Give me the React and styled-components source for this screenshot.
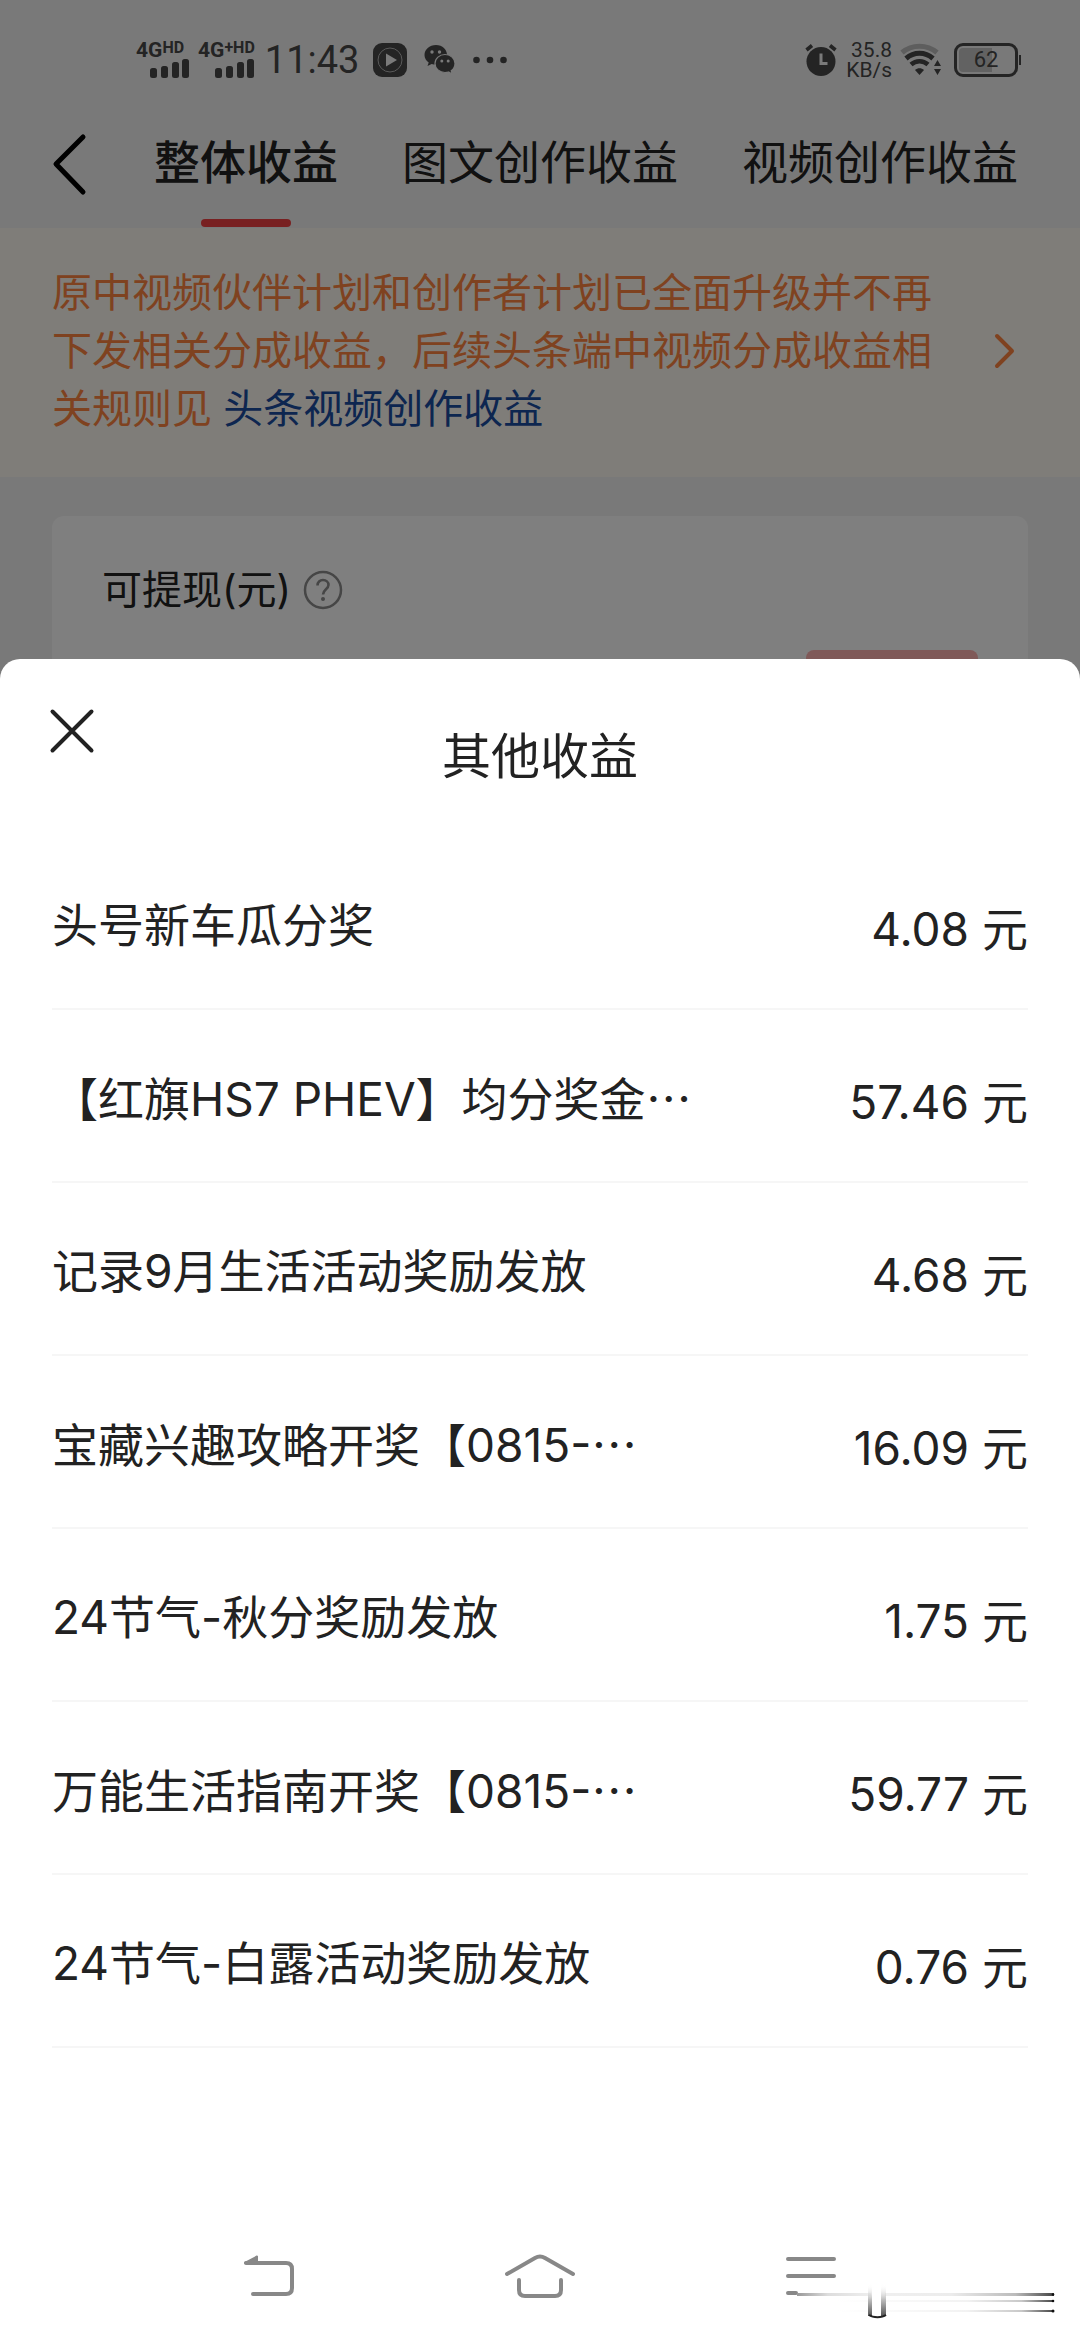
import React from "react";
import styled, { createGlobalStyle } from "styled-components";

const incomeList = [
    { name: "头号新车瓜分奖", amount: "4.08" },
    { name: "【红旗HS7 PHEV】均分奖金", amount: "57.46", more: true },
    { name: "记录9月生活活动奖励发放", amount: "4.68" },
    { name: "宝藏兴趣攻略开奖【0815-", amount: "16.09", more: true },
    { name: "24节气-秋分奖励发放", amount: "1.75" },
    { name: "万能生活指南开奖【0815-", amount: "59.77", more: true },
    { name: "24节气-白露活动奖励发放", amount: "0.76" },
];

const tabs = ["整体收益", "图文创作收益", "视频创作收益"];

function SignalBars() {
    return (
        <svg width="40" height="19" viewBox="0 0 40 19" fill="#484848">
            <rect x="0" y="9" width="7" height="10" rx="2.5" />
            <rect x="11" y="7" width="7" height="12" rx="2.5" />
            <rect x="22" y="3" width="7" height="16" rx="2.5" />
            <rect x="32" y="0" width="7" height="19" rx="2.5" />
        </svg>
    );
}

function StatusIcons() {
    return (
        <>
            <svg width="34" height="34" viewBox="0 0 34 34">
                <rect x="0" y="0" width="34" height="34" rx="9" fill="#484848" />
                <circle cx="17" cy="17" r="12" fill="none" stroke="#b4b4b4" strokeWidth="1" />
                <path d="M13 10.500v13l11-6.500z" fill="#f4f4f4" />
            </svg>
            <svg width="32" height="32" viewBox="0 0 32 32">
                <path d="M12 1C5.400 1 .5 5.500.5 11c0 3.200 1.600 5.800 4.200 7.600L3.500 22l4.200-2.100c1.300.4 2.800.6 4.300.6 6.600 0 11-4.200 11-9.500S18.600 1 12 1z" fill="#484848" />
                <circle cx="8" cy="8" r="1.700" fill="#f4f4f4" />
                <circle cx="15.500" cy="8" r="1.700" fill="#f4f4f4" />
                <path d="M21 10.500c-5.500 0-10 3.900-10 9s4.500 9 10 9c1.200 0 2.400-.2 3.500-.5l3.700 2-1-3.200c2.300-1.700 3.800-4.300 3.800-7.300 0-5.100-4.500-9-10-9z" fill="#484848" stroke="#f4f4f4" strokeWidth="1.200" />
                <circle cx="17.800" cy="17" r="1.500" fill="#f4f4f4" />
                <circle cx="24.200" cy="17" r="1.500" fill="#f4f4f4" />
            </svg>
            <svg width="34" height="8" viewBox="0 0 34 8" fill="#484848">
                <circle cx="3.500" cy="4" r="3.300" />
                <circle cx="17" cy="4" r="3.300" />
                <circle cx="30.500" cy="4" r="3.300" />
            </svg>
        </>
    );
}

function AlarmIcon() {
    return (
        <svg width="34" height="34" viewBox="0 0 34 34">
            <circle cx="17" cy="18.500" r="14.500" fill="#484848" />
            <path d="M2.500 7L8 2.500M26 2.500L31.500 7" stroke="#484848" strokeWidth="3.600" fill="none" />
            <path d="M17 10.500v10h6.500" stroke="#f4f4f4" strokeWidth="3" fill="none" />
        </svg>
    );
}

function WifiIcon() {
    return (
        <svg width="42" height="34" viewBox="0 0 42 34" fill="none">
            <path d="M2 9.500C12 1 27 1 37 9.500" stroke="#bcbcbc" strokeWidth="5" />
            <path d="M6 15.500c8-7 19-7 27 0" stroke="#484848" strokeWidth="5" />
            <path d="M11 21.500c5-4.500 12-4.500 17 0" stroke="#484848" strokeWidth="4.500" />
            <path d="M15 27c2.500-2.500 6.500-2.500 9 0l-4.500 5z" fill="#484848" />
            <path d="M34 23l3.500-6 3.500 6zM34 26l3.500 6 3.500-6z" fill="#484848" />
        </svg>
    );
}

// 底部右侧的装饰线条
function FadeLines() {
    return (
        <svg width="260" height="36" viewBox="0 0 260 36">
            <defs>
                <linearGradient id="fadeOut" x1="0" x2="1" y1="0" y2="0">
                    <stop offset="0" stopColor="#999" />
                    <stop offset="0.120" stopColor="#ddd" />
                    <stop offset="0.300" stopColor="#f0f0f0" />
                    <stop offset="0.600" stopColor="#ececec" />
                    <stop offset="0.850" stopColor="#bbb" />
                    <stop offset="1" stopColor="#444" />
                </linearGradient>
                <linearGradient id="fadeIn" x1="0" x2="1" y1="0" y2="0">
                    <stop offset="0" stopColor="#fff" />
                    <stop offset="0.600" stopColor="#f2f2f2" />
                    <stop offset="0.850" stopColor="#c8c8c8" />
                    <stop offset="1" stopColor="#444" />
                </linearGradient>
                <linearGradient id="fadeDown" x1="0" x2="0" y1="0" y2="1">
                    <stop offset="0" stopColor="#fff" stopOpacity="0" />
                    <stop offset="0.500" stopColor="#bbb" />
                    <stop offset="1" stopColor="#555" />
                </linearGradient>
            </defs>
            <rect x="0" y="9" width="257" height="3" fill="url(#fadeOut)" />
            <rect x="40" y="16" width="217" height="2" fill="url(#fadeIn)" />
            <rect x="40" y="26" width="217" height="2" fill="url(#fadeIn)" />
            <rect x="74" y="0" width="14" height="32" fill="#fff" />
            <rect x="71" y="0" width="4" height="32" fill="url(#fadeDown)" />
            <rect x="84" y="0" width="5" height="32" fill="url(#fadeDown)" />
            <path d="M72 31c4 3 13 3 17 0" stroke="#222" strokeWidth="2" fill="none" />
            <circle cx="256" cy="10.500" r="1.300" fill="#111" />
            <circle cx="256" cy="17" r="1.300" fill="#111" />
            <circle cx="256" cy="27" r="1.500" fill="#111" />
        </svg>
    );
}

function App() {
    return (
        <PAGE>
            <GlobalStyle />
            <BACKDROP>
                <STATUS_BAR>
                    <SIGNAL>
                        <NETWORK>4G<sup>HD</sup></NETWORK>
                        <SignalBars />
                    </SIGNAL>
                    <SIGNAL>
                        <NETWORK>4G<sup>+HD</sup></NETWORK>
                        <SignalBars />
                    </SIGNAL>
                    <CLOCK>11:43</CLOCK>
                    <STATUS_GROUP $gap="17px">
                        <StatusIcons />
                    </STATUS_GROUP>
                    <STATUS_GROUP $gap="8px" $end>
                        <AlarmIcon />
                        <SPEED>35.8<br />KB/s</SPEED>
                        <WifiIcon />
                        <BATTERY>62</BATTERY>
                    </STATUS_GROUP>
                </STATUS_BAR>

                <TAB_BAR>
                    <ICON_BUTTON $width="38px" aria-label="返回">
                        <svg width="38" height="64" viewBox="0 0 38 64" fill="none">
                            <path d="M31 5L4 32l27 28" stroke="#000" strokeWidth="5" strokeLinecap="round" strokeLinejoin="round" />
                        </svg>
                    </ICON_BUTTON>
                    {tabs.map((tab, i) => (
                        <TAB key={tab} $active={i === 0}>{tab}</TAB>
                    ))}
                </TAB_BAR>

                <NOTICE>
                    <p>
                        原中视频伙伴计划和创作者计划已全面升级并不再下发相关分成收益，后续头条端中视频分成收益相关规则见 <a href="#rule">头条视频创作收益</a>
                    </p>
                    <svg width="36" height="40" viewBox="0 0 36 40" fill="none">
                        <path d="M5 5l15 15L5 35" stroke="#ff8540" strokeWidth="4" strokeLinecap="round" strokeLinejoin="round" />
                    </svg>
                </NOTICE>

                <CARD>
                    <CARD_TITLE>
                        可提现(元)
                        <svg width="40" height="40" viewBox="0 0 40 40" fill="none" stroke="#8c8c8c">
                            <circle cx="20" cy="20" r="18" strokeWidth="2.500" />
                            <path d="M14.500 15.500c0-3.500 2.400-5.500 5.500-5.500s5.500 2 5.500 5c0 4-5.500 4.500-5.500 9.500" strokeWidth="2.600" />
                            <circle cx="20" cy="29" r="2" fill="#8c8c8c" stroke="none" />
                        </svg>
                    </CARD_TITLE>
                    <WITHDRAW aria-label="提现" />
                </CARD>
            </BACKDROP>

            <SHEET>
                <SHEET_HEAD>
                    <ICON_BUTTON $width="48px" aria-label="关闭">
                        <svg width="48" height="48" viewBox="0 0 48 48" fill="none">
                            <path d="M4.500 4.500l39 39M43.500 4.500l-39 39" stroke="#222" strokeWidth="4" strokeLinecap="round" />
                        </svg>
                    </ICON_BUTTON>
                    <h2>其他收益</h2>
                </SHEET_HEAD>
                <LIST>
                    {incomeList.map((item) => (
                        <ROW key={item.name}>
                            <NAME>{item.name}{item.more && <MORE>…</MORE>}</NAME>
                            <AMOUNT>{item.amount} 元</AMOUNT>
                        </ROW>
                    ))}
                </LIST>
                <NAV_BAR>
                    <ICON_BUTTON $width="72px" aria-label="后退">
                        <svg width="54" height="48" viewBox="0 0 54 48" fill="none" stroke="#888" strokeWidth="4" strokeLinecap="round" strokeLinejoin="round">
                            <path d="M4 11h40q6 0 6 6v19q0 6-6 6H11" />
                            <path d="M3 11L15 4.500V11z" fill="#888" strokeWidth="2" />
                        </svg>
                    </ICON_BUTTON>
                    <ICON_BUTTON $width="72px" aria-label="主页">
                        <svg width="72" height="48" viewBox="0 0 72 48" fill="none" stroke="#888" strokeWidth="4" strokeLinecap="round">
                            <path d="M3 22L31 6q5-3 10 0l28 16" />
                            <path d="M15 28v10q0 6 6 6h30q6 0 6-6V28" />
                        </svg>
                    </ICON_BUTTON>
                    <ICON_BUTTON $width="72px" aria-label="菜单">
                        <svg width="50" height="40" viewBox="0 0 50 40" fill="none" stroke="#888" strokeWidth="4" strokeLinecap="round">
                            <path d="M2 3h46M2 20h46M2 37h8" />
                        </svg>
                    </ICON_BUTTON>
                    <LINES><FadeLines /></LINES>
                </NAV_BAR>
            </SHEET>
        </PAGE>
    );
}

const GlobalStyle = createGlobalStyle`
    * {
        box-sizing: border-box;
    }
    body {
        margin: 0;
        font-family: Inter, "Noto Sans CJK SC", sans-serif;
        color: #222;
    }
    h2, p, ul {
        margin: 0;
        padding: 0;
        font-weight: 400;
    }
    button {
        padding: 0;
        border: none;
        background: none;
        font-family: inherit;
        color: inherit;
    }
    svg {
        display: block;
        flex: none;
    }
`;

const PAGE = styled.div`
    display: flex;
    flex-direction: column;
    min-height: 100vh;
    background-color: #fff;
`;

const BACKDROP = styled.div`
    position: relative;
    background-color: #f3f3f3;

    &::after {
        content: "";
        position: absolute;
        inset: 0;
        background-color: rgba(0, 0, 0, 0.5);
    }
`;

const STATUS_BAR = styled.div`
    display: flex;
    align-items: center;
    height: 112px;
    padding: 8px 58px 0 136px;
    color: #484848;
    font-family: Roboto, sans-serif;
`;

const SIGNAL = styled.div`
    display: flex;
    flex-direction: column;
    align-items: flex-end;
    min-width: 54px;
    margin-right: 8px;
`;

const NETWORK = styled.span`
    align-self: flex-start;
    font-size: 21px;
    font-weight: 700;
    line-height: 17px;

    sup {
        font-size: 16px;
        line-height: 10px;
        vertical-align: 4px;
    }
`;

const CLOCK = styled.div`
    margin: 0 14px 0 2px;
    font-size: 38px;
    line-height: 40px;
`;

const STATUS_GROUP = styled.div`
    display: flex;
    align-items: center;
    gap: ${(props) => props.$gap};
    margin-left: ${(props) => (props.$end ? "auto" : "0")};
`;

const SPEED = styled.div`
    font-size: 21px;
    line-height: 20px;
    text-align: right;
`;

const BATTERY = styled.div`
    position: relative;
    width: 64px;
    height: 34px;
    margin: 0 4px;
    border: 3px solid #484848;
    border-radius: 9px;
    background: linear-gradient(90deg, #c4c4c4 60%, transparent 60%);
    background-clip: content-box;
    padding: 2px;
    font-size: 22px;
    line-height: 24px;
    text-align: center;

    &::after {
        content: "";
        position: absolute;
        right: -6px;
        top: 9px;
        width: 2px;
        height: 10px;
        background-color: #484848;
    }
`;

const TAB_BAR = styled.div`
    display: flex;
    gap: 64px;
    height: 116px;
    padding-left: 52px;
    overflow: hidden;
`;

const ICON_BUTTON = styled.button`
    display: flex;
    align-items: center;
    justify-content: center;
    flex: none;
    width: ${(props) => props.$width};

    ${TAB_BAR} & {
        height: 104px;
    }
`;

const TAB = styled.button`
    position: relative;
    flex: none;
    font-size: 46px;
    line-height: 100px;
    height: 100px;
    white-space: nowrap;
    font-weight: ${(props) => (props.$active ? 500 : 400)};

    &::after {
        content: "";
        display: ${(props) => (props.$active ? "block" : "none")};
        position: absolute;
        top: 107px;
        left: calc(50% - 45px);
        width: 90px;
        height: 8px;
        border-radius: 4px;
        background-color: #f04142;
    }
`;

const NOTICE = styled.div`
    display: flex;
    align-items: center;
    gap: 40px;
    padding: 36px 52px 39px;
    background-color: #fffaf2;
    color: #ff8540;

    p {
        flex: 1;
        font-size: 40px;
        line-height: 58px;
    }
    a {
        color: #1a4ca0;
        text-decoration: none;
    }
`;

const CARD = styled.div`
    margin: 39px 52px 0;
    padding: 48px 50px 0;
    border-radius: 12px;
    background-color: #fff;
`;

const CARD_TITLE = styled.div`
    display: flex;
    align-items: center;
    gap: 12px;
    font-size: 40px;
    line-height: 52px;
`;

const WITHDRAW = styled.button`
    display: block;
    width: 172px;
    height: 80px;
    margin: 34px 0 0 auto;
    border-radius: 8px;
    background-color: #ffb2b0;
`;

const SHEET = styled.div`
    position: relative;
    z-index: 1;
    display: flex;
    flex-direction: column;
    flex: 1;
    margin-top: -71px;
    border-radius: 20px 20px 0 0;
    background-color: #fff;
`;

const SHEET_HEAD = styled.div`
    display: grid;
    grid-template-columns: 48px 1fr 48px;
    align-items: start;
    padding: 48px 48px 0;

    h2 {
        margin-top: 16px;
        font-size: 49px;
        line-height: 68px;
        text-align: center;
    }
`;

const LIST = styled.ul`
    padding: 46px 52px 0;
    list-style: none;
`;

const ROW = styled.li`
    display: flex;
    align-items: center;
    justify-content: space-between;
    height: 173px;
    padding-top: 8px;
    border-bottom: 2px solid #f6f6f6;
    font-size: 46px;
    line-height: 60px;
    white-space: nowrap;
`;

const NAME = styled.span`
    padding-bottom: 4px;
`;

const MORE = styled.span`
    font-family: "Noto Sans CJK SC", sans-serif;
`;

const AMOUNT = styled.span`
    padding-top: 4px;
`;

const NAV_BAR = styled.div`
    position: relative;
    display: grid;
    grid-template-columns: repeat(3, 1fr);
    justify-items: center;
    align-items: center;
    height: 128px;
    margin-top: auto;
    padding: 0 134px;
`;

const LINES = styled.div`
    position: absolute;
    right: 23px;
    bottom: 20px;
`;

export default App;
